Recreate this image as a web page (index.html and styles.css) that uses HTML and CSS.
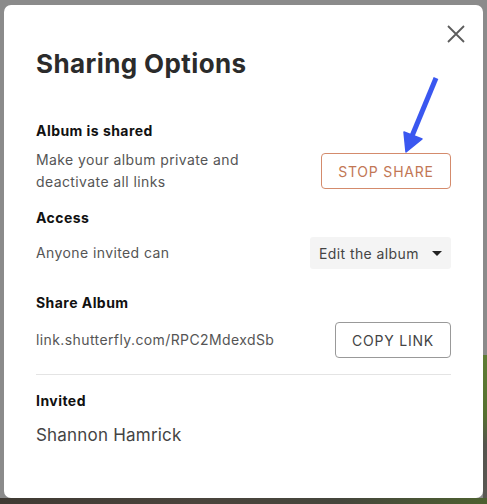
FILE: index.html
```html
<!DOCTYPE html>
<html>
<head>
<meta charset="utf-8">
<link rel="stylesheet" href="styles.css">
</head>
<body>
<div class="modal">
  <button class="close" aria-label="Close">
    <svg width="18" height="18" viewBox="0 0 18 18"><path d="M1 1L17 17M17 1L1 17" stroke="#5c5c5c" stroke-width="1.8" fill="none"/></svg>
  </button>
  <h1 class="title">Sharing Options</h1>

  <section class="section shared">
    <h2 class="label">Album is shared</h2>
    <div class="row">
      <p class="desc">Make your album private and<br>deactivate all links</p>
      <button class="btn btn-stop">STOP SHARE</button>
    </div>
  </section>

  <section class="section access">
    <h2 class="label">Access</h2>
    <div class="row">
      <p class="desc">Anyone invited can</p>
      <div class="select">Edit the album <span class="caret"></span></div>
    </div>
  </section>

  <section class="section sharealbum">
    <h2 class="label">Share Album</h2>
    <div class="row">
      <p class="desc">link.shutterfly.com/RPC2MdexdSb</p>
      <button class="btn btn-copy">COPY LINK</button>
    </div>
  </section>

  <hr class="divider">

  <section class="section invited">
    <h2 class="label">Invited</h2>
    <p class="person">Shannon Hamrick</p>
  </section>

  <svg class="arrow" width="50" height="90" viewBox="0 0 50 90">
    <path d="M40 5L16 63" stroke="#3a57f0" stroke-width="5" stroke-linecap="butt" fill="none"/>
    <path d="M8 59L10 79L26 66Z" fill="#3a57f0" stroke="#3a57f0" stroke-width="1.5" stroke-linejoin="round"/>
  </svg>
</div>
</body>
</html>
```
FILE: styles.css
```css
* { box-sizing: border-box; }
html, body { margin: 0; height: 100%; }
body {
  padding: 5px 4px 6px 4px;
  font-family: Inter, "Open Sans", sans-serif;
  background:
    linear-gradient(90deg, #3f3a33 0, #4a443c 40%, #45463c 70%, #4d6130 100%) left bottom / 100% 6px no-repeat,
    linear-gradient(180deg, #5f7d35 0, #567030 40%, #55544e 60%, #5a5853 100%) right 355px / 4px 150px no-repeat,
    #8b8b8b;
}
.modal {
  position: relative;
  background: #fff;
  border-radius: 7px;
  height: 493px;
  padding: 0 32px;
  display: flex;
  flex-direction: column;
}
.close {
  position: absolute;
  top: 20px;
  right: 18px;
  border: 0;
  background: none;
  padding: 0;
  width: 18px;
  height: 18px;
}
.close svg { display: block; }
.title {
  margin: 43px 0 0 0;
  font-size: 26px;
  line-height: 32px;
  font-weight: 700;
  color: #2b2b2b;
  letter-spacing: 0.4px;
}
.section { display: flex; flex-direction: column; }
.label {
  margin: 0;
  font-size: 14px;
  line-height: 20px;
  font-weight: 700;
  color: #111;
  letter-spacing: 0.45px;
}
.row {
  display: flex;
  justify-content: space-between;
  align-items: center;
}
.desc {
  margin: 0;
  font-size: 14px;
  line-height: 22px;
  color: #555;
  letter-spacing: 0.4px;
}
.shared { margin-top: 41px; }
.shared .row { margin-top: 8px; }
.btn {
  font-family: inherit;
  font-size: 14px;
  background: #fff;
  border-radius: 4px;
  letter-spacing: 0.8px;
  height: 36px;
  padding: 0;
}
.btn-stop {
  width: 130px;
  border: 1px solid #d48b6c;
  color: #c27755;
}
.access { margin-top: 15px; }
.access .row { margin-top: 9px; }
.select {
  width: 141px;
  height: 32px;
  background: #f4f4f4;
  border-radius: 3px;
  font-size: 14px;
  color: #444;
  display: flex;
  align-items: center;
  justify-content: space-between;
  padding: 0 9px;
  letter-spacing: 0.4px;
}
.caret {
  width: 0; height: 0;
  border-left: 5px solid transparent;
  border-right: 5px solid transparent;
  border-top: 5px solid #222;
}
.sharealbum { margin-top: 24px; }
.sharealbum .row { margin-top: 9px; }
.btn-copy {
  width: 116px;
  border: 1px solid #999;
  color: #444;
}
.divider {
  margin: 16px 0 0 0;
  border: 0;
  border-top: 1px solid #e4e4e4;
  height: 0;
}
.invited { margin-top: 16px; }
.person {
  margin: 12px 0 0 0;
  font-size: 17px;
  line-height: 24px;
  color: #444;
  letter-spacing: 0.2px;
}
.arrow {
  position: absolute;
  left: 392px;
  top: 68px;
}
```
